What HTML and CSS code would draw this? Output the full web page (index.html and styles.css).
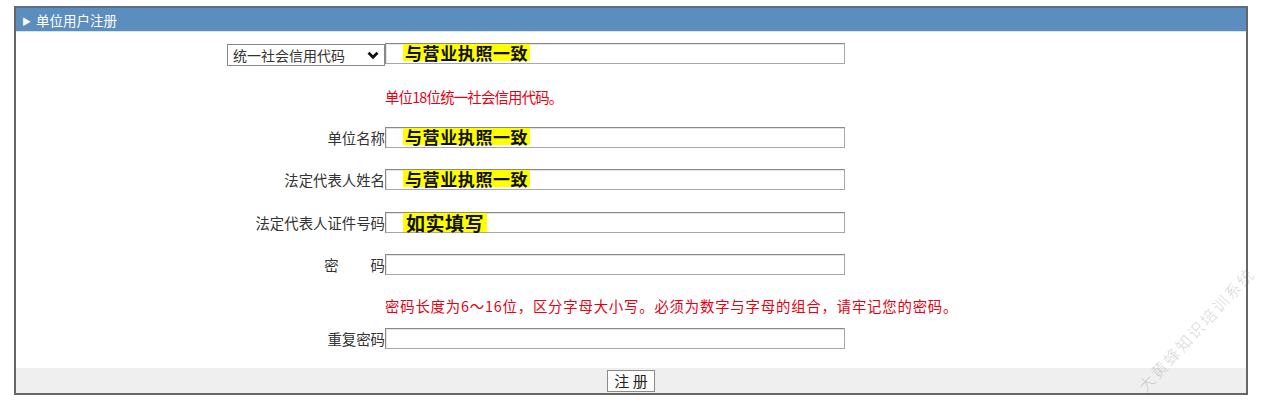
FILE: index.html
```html
<!DOCTYPE html>
<html lang="zh-CN">

<head>
  <meta charset="UTF-8">
  <meta name="viewport" content="width=device-width, initial-scale=1.0">
  <title>单位用户注册</title>
  <link rel="stylesheet" href="styles.css">
</head>

<body>
  <div class="panel">
    <div class="panel-head"><span class="arrow">&#9654;</span>单位用户注册</div>
    <div class="panel-body">
      <div class="row">
        <div class="label">
          <span class="select-wrap">
            <select class="id-type">
              <option>统一社会信用代码</option>
              <option>组织机构代码</option>
            </select>
            <svg class="chev" width="12" height="9" viewBox="0 0 12 9"><path d="M1.5 1.8 L6 6.3 L10.5 1.8" fill="none" stroke="#111" stroke-width="2.8"/></svg>
          </span>
        </div>
        <div class="field">
          <input type="text" class="txt">
          <span class="mark">与营业执照一致</span>
        </div>
      </div>
      <div class="row hint-row">
        <div></div>
        <div class="hint hint-short">单位18位统一社会信用代码。</div>
      </div>
      <div class="row row-s">
        <div class="label">单位名称</div>
        <div class="field">
          <input type="text" class="txt">
          <span class="mark">与营业执照一致</span>
        </div>
      </div>
      <div class="row">
        <div class="label">法定代表人姓名</div>
        <div class="field">
          <input type="text" class="txt">
          <span class="mark">与营业执照一致</span>
        </div>
      </div>
      <div class="row hint-row">
        <div class="label">法定代表人证件号码</div>
        <div class="field">
          <input type="text" class="txt">
          <span class="mark mark-lg">如实填写</span>
        </div>
      </div>
      <div class="row">
        <div class="label">密<span class="gap"></span>码</div>
        <div class="field">
          <input type="password" class="txt">
        </div>
      </div>
      <div class="row hint-row2">
        <div></div>
        <div class="hint hint-long">密码长度为6～16位，区分字母大小写。必须为数字与字母的组合，请牢记您的密码。</div>
      </div>
      <div class="row row-last">
        <div class="label">重复密码</div>
        <div class="field">
          <input type="password" class="txt">
        </div>
      </div>
    </div>
    <div class="panel-foot">
      <button type="button" class="btn">注 册</button>
    </div>
  </div>
  <div class="watermark">大黄蜂知识培训系统</div>
</body>

</html>
```

FILE: styles.css
```css
body {
  margin: 0;
  font-family: "Noto Sans CJK SC", "Noto Sans", sans-serif;
  font-size: 14px;
  color: #333;
  background: #fff;
}
.panel {
  box-sizing: border-box;
  width: 1234px;
  height: 389px;
  margin: 6px 0 0 14px;
  border: 2px solid #666;
  border-top-color: #5a6f85;
  display: flex;
  flex-direction: column;
}
.panel-head {
  height: 24px;
  line-height: 24px;
  padding-left: 6px;
  background: #5c8dbf;
  color: #fff;
  font-size: 13.5px;
  border-bottom: 1px solid #d6e4f0;
  box-sizing: border-box;
}
.arrow {
  font-size: 9px;
  margin-right: 5px;
  vertical-align: 1px;
}
.panel-body {
  flex: 1;
}
.row {
  display: grid;
  grid-template-columns: 369px 1fr;
  align-items: center;
  height: 43px;
}
.row-s {
  height: 41px;
}
.hint-row {
  height: 42px;
}
.hint-row2 {
  height: 39px;
}
.row-last {
  height: 26px;
}
.label {
  text-align: right;
  white-space: nowrap;
  font-size: 14.4px;
  line-height: 21px;
}
.gap {
  display: inline-block;
  width: 32px;
}
.select-wrap {
  position: relative;
  display: inline-block;
  vertical-align: middle;
}
.id-type {
  box-sizing: border-box;
  width: 158px;
  height: 22px;
  margin-top: 1px;
  font-family: inherit;
  font-size: 14px;
  color: #333;
  background: #fff;
  border: 1px solid #888;
  border-radius: 0;
  padding: 0 20px 0 5px;
  -webkit-appearance: none;
  appearance: none;
  display: block;
}
.chev {
  position: absolute;
  right: 6px;
  top: 8px;
  pointer-events: none;
}
.field {
  position: relative;
  height: 21px;
}
.txt {
  box-sizing: border-box;
  width: 460px;
  height: 21px;
  margin: 0;
  border: 1px solid #a8a8a8;
  border-top-color: #8a8a8a;
  border-left-color: #8a8a8a;
  box-shadow: inset 1px 1px 0 #e4e4e4;
  background: #fff;
  display: block;
}
.mark {
  position: absolute;
  left: 18px;
  top: 1px;
  padding: 0 2px;
  background: #ffff00;
  color: #111;
  font-weight: bold;
  font-size: 17px;
  line-height: 17px;
  letter-spacing: 0.6px;
}
.mark-lg {
  font-size: 19px;
  line-height: 19px;
  top: 1px;
  padding: 0 3px;
  letter-spacing: 0.5px;
}
.hint {
  color: #e60012;
  font-size: 14.4px;
  white-space: nowrap;
}
.hint-short {
  letter-spacing: -0.8px;
}
.hint-long {
  letter-spacing: 0.8px;
}
.panel-foot {
  height: 25px;
  background: #efefef;
  text-align: center;
  padding-top: 2px;
  box-sizing: border-box;
}
.btn {
  box-sizing: border-box;
  width: 48px;
  height: 22px;
  padding: 0;
  font-family: inherit;
  font-size: 15px;
  line-height: 18px;
  color: #222;
  background: #fcfcfc;
  border: 1px solid #8a8a8a;
  border-radius: 0;
}
.watermark {
  position: absolute;
  left: 1106px;
  top: 317px;
  width: 180px;
  text-align: center;
  font-size: 16px;
  font-weight: 300;
  letter-spacing: 2px;
  color: rgba(130, 130, 130, 0.35);
  transform: rotate(-47deg);
  white-space: nowrap;
}
```
